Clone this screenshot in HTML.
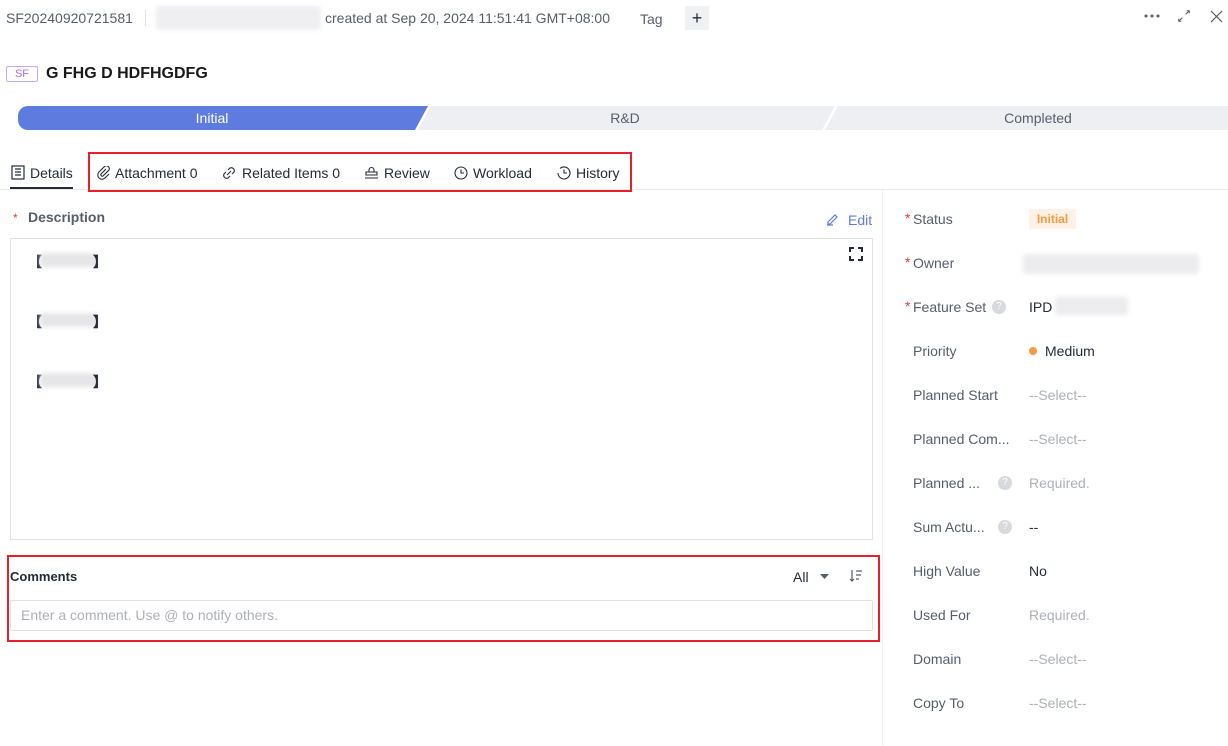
<!DOCTYPE html><html><head><meta charset="utf-8"><style>
*{margin:0;padding:0;box-sizing:border-box}
body{width:1228px;height:746px;background:#fff;font-family:"Liberation Sans",sans-serif;font-size:14px;color:#252b3a;position:relative;overflow:hidden}
.a{position:absolute}
.blur{background:#e6e6e8;border-radius:3px;filter:blur(2px)}
.lab{position:absolute;left:913px;color:#575d6c;font-size:14px}
.star{color:#e53935;position:absolute;left:905px}
.val{position:absolute;left:1029px;font-size:14px}
.ph{color:#adb0b8}
.q{position:absolute;width:14px;height:14px;border-radius:50%;background:#d8d9dd;color:#fff;font-size:10px;text-align:center;line-height:14px}
</style></head><body>
<div class="a" style="left:6px;top:10px;color:#575d6c">SF20240920721581</div>
<div class="a" style="left:145px;top:10px;width:1px;height:16px;background:#dfe1e6"></div>
<div class="a blur" style="left:156px;top:6px;width:165px;height:24px;background:#efeff1"></div>
<div class="a" style="left:325px;top:10px;color:#575d6c">created at Sep 20, 2024 11:51:41 GMT+08:00</div>
<div class="a" style="left:640px;top:11px;color:#575d6c">Tag</div>
<div class="a" style="left:685px;top:6px;width:24px;height:24px;background:#f0f1f3;text-align:center;line-height:24px;font-size:18px;color:#252b3a">+</div>
<svg class="a" style="left:1144px;top:14px" width="18" height="4"><circle cx="2" cy="2" r="1.5" fill="#575d6c"/><circle cx="8" cy="2" r="1.5" fill="#575d6c"/><circle cx="14" cy="2" r="1.5" fill="#575d6c"/></svg>
<svg class="a" style="left:1177px;top:9px" width="14" height="14" viewBox="0 0 16 16" fill="none" stroke="#575d6c" stroke-width="1.2"><path d="M10 6l4-4M11 2h3v3M6 10l-4 4M2 11v3h3"/></svg>
<svg class="a" style="left:1210px;top:10px" width="13" height="13" viewBox="0 0 14 14" stroke="#575d6c" stroke-width="1.2"><path d="M1 1l12 12M13 1L1 13"/></svg>

<div class="a" style="left:6px;top:66px;width:32px;height:16px;border:1px solid #c9a6ff;color:#a66ef5;font-size:11px;text-align:center;line-height:14px;border-radius:2px">SF</div>
<div class="a" style="left:46px;top:65px;font-size:16px;font-weight:bold;color:#191919">G FHG D HDFHGDFG</div>

<svg class="a" style="left:18px;top:106px" width="1210" height="24">
<path d="M10 0H410L397 24H10A10 10 0 0 1 0 14V10A10 10 0 0 1 10 0Z" fill="#5e7ce0"/>
<path d="M413 0H817L804 24H400Z" fill="#eeeff3"/>
<path d="M820 0H1210V24H807Z" fill="#eeeff3"/>
<text x="194" y="17" fill="#fff" font-size="14" text-anchor="middle" font-family="Liberation Sans">Initial</text>
<text x="607" y="17" fill="#575d6c" font-size="14" text-anchor="middle" font-family="Liberation Sans">R&amp;D</text>
<text x="1020" y="17" fill="#575d6c" font-size="14" text-anchor="middle" font-family="Liberation Sans">Completed</text>
</svg>

<div class="a" style="left:0;top:189px;width:1228px;height:1px;background:#e8e9ed"></div>
<div class="a" style="left:882px;top:190px;width:1px;height:556px;background:#eeeff2"></div>
<svg class="a" style="left:11px;top:165px" width="14" height="15" viewBox="0 0 14 15" fill="none" stroke="#252b3a" stroke-width="1.2"><rect x="1" y="1" width="12" height="13"/><path d="M4 4h6M4 7h6M4 10h6"/></svg>
<div class="a" style="left:30px;top:165px;color:#252b3a">Details</div>
<div class="a" style="left:10px;top:187px;width:63px;height:2px;background:#252b3a"></div>
<div class="a" style="left:88px;top:152px;width:544px;height:40px;border:2px solid #e5202b"></div>
<svg class="a" style="left:97px;top:166px" width="14" height="14" viewBox="0 0 14 14" fill="none" stroke="#252b3a" stroke-width="1.1"><path d="M9 3L4 8a1.5 1.5 0 0 0 2 2l6-6a3 3 0 0 0-4-4L2 6a4 4 0 0 0 6 6l4-4"/></svg>
<div class="a" style="left:115px;top:165px">Attachment 0</div>
<svg class="a" style="left:221px;top:165px" width="16" height="16" viewBox="0 0 16 16" fill="none" stroke="#252b3a" stroke-width="1.1"><path d="M7 5l2-2a3 3 0 0 1 4 4l-2 2M9 11l-2 2a3 3 0 0 1-4-4l2-2M6 10l4-4"/></svg>
<div class="a" style="left:242px;top:165px">Related Items 0</div>
<svg class="a" style="left:364px;top:165px" width="15" height="15" viewBox="0 0 15 15" fill="none" stroke="#252b3a" stroke-width="1.1"><path d="M5 7V5a2.5 2.5 0 0 1 5 0v2M2 7h11v3H2zM1 13h13"/></svg>
<div class="a" style="left:384px;top:165px">Review</div>
<svg class="a" style="left:454px;top:166px" width="14" height="14" viewBox="0 0 14 14" fill="none" stroke="#252b3a" stroke-width="1.1"><circle cx="7" cy="7" r="6"/><path d="M7 3.5V7h3"/></svg>
<div class="a" style="left:473px;top:165px">Workload</div>
<svg class="a" style="left:557px;top:166px" width="14" height="14" viewBox="0 0 14 14" fill="none" stroke="#252b3a" stroke-width="1.1"><path d="M3 2.5A6 6 0 1 1 1 7"/><path d="M7 3.5V7h3"/></svg>
<div class="a" style="left:576px;top:165px">History</div>

<div class="a" style="left:13px;top:211px;color:#e53935;font-size:12px">*</div>
<div class="a" style="left:28px;top:209px;font-weight:bold;color:#575d6c">Description</div>
<svg class="a" style="left:826px;top:212px" width="14" height="14" viewBox="0 0 14 14" fill="none" stroke="#5e7ce0" stroke-width="1.2"><path d="M2 10l7-7 2 2-7 7H2z M1 13h6"/></svg>
<div class="a" style="left:848px;top:212px;color:#5e7ce0">Edit</div>
<div class="a" style="left:10px;top:238px;width:863px;height:302px;border:1px solid #dfe1e6"></div>
<svg class="a" style="left:849px;top:247px" width="14" height="14" fill="none" stroke="#252b3a" stroke-width="2"><path d="M1 5V1h4M9 1h4v4M13 9v4H9M5 13H1V9"/></svg>
<div class="a" style="left:28px;top:252px;font-weight:bold">【</div><div class="a blur" style="left:40px;top:253px;width:58px;height:14px"></div><div class="a" style="left:93px;top:252px;font-weight:bold">】</div>
<div class="a" style="left:28px;top:312px;font-weight:bold">【</div><div class="a blur" style="left:40px;top:313px;width:58px;height:14px"></div><div class="a" style="left:93px;top:312px;font-weight:bold">】</div>
<div class="a" style="left:28px;top:372px;font-weight:bold">【</div><div class="a blur" style="left:40px;top:373px;width:58px;height:14px"></div><div class="a" style="left:93px;top:372px;font-weight:bold">】</div>

<div class="a" style="left:7px;top:555px;width:873px;height:87px;border:2px solid #e5202b"></div>
<div class="a" style="left:10px;top:569px;font-weight:bold;font-size:13px">Comments</div>
<div class="a" style="left:793px;top:569px;color:#252b3a">All</div>
<svg class="a" style="left:820px;top:574px" width="9" height="6"><path d="M0 0h9L4.5 5z" fill="#575d6c"/></svg>
<svg class="a" style="left:849px;top:569px" width="14" height="13" fill="none" stroke="#575d6c" stroke-width="1.2"><path d="M3 1v11M1 10l2 2 2-2M7 2h6M7 6h5M7 10h3"/></svg>
<div class="a" style="left:10px;top:600px;width:863px;height:31px;border:1px solid #dfe1e6;border-radius:2px"></div>
<div class="a ph" style="left:21px;top:607px">Enter a comment. Use @ to notify others.</div>

<span class="star" style="top:210px">*</span><div class="lab" style="top:211px">Status</div>
<div class="a" style="left:1029px;top:209px;width:47px;height:20px;background:#fff1e6;border-radius:2px;color:#fa9841;font-size:12px;font-weight:bold;text-align:center;line-height:20px">Initial</div>
<span class="star" style="top:254px">*</span><div class="lab" style="top:255px">Owner</div>
<div class="a blur" style="left:1023px;top:254px;width:176px;height:20px;background:#ececee"></div>
<span class="star" style="top:298px">*</span><div class="lab" style="top:299px">Feature Set</div>
<div class="q" style="left:992px;top:300px">?</div>
<div class="val" style="top:299px">IPD</div><div class="a blur" style="left:1055px;top:297px;width:73px;height:18px;background:#ececee"></div>
<div class="lab" style="top:343px">Priority</div>
<div class="a" style="left:1029px;top:347px;width:8px;height:8px;border-radius:50%;background:#fa9841"></div>
<div class="val" style="left:1045px;top:343px">Medium</div>
<div class="lab" style="top:387px">Planned Start</div><div class="val ph" style="top:387px">--Select--</div>
<div class="lab" style="top:431px">Planned Com...</div><div class="val ph" style="top:431px">--Select--</div>
<div class="lab" style="top:475px">Planned ...</div>
<div class="q" style="left:998px;top:476px">?</div>
<div class="val ph" style="top:475px">Required.</div>
<div class="lab" style="top:519px">Sum Actu...</div>
<div class="q" style="left:998px;top:520px">?</div>
<div class="val" style="top:519px">--</div>
<div class="lab" style="top:563px">High Value</div><div class="val" style="top:563px">No</div>
<div class="lab" style="top:607px">Used For</div><div class="val ph" style="top:607px">Required.</div>
<div class="lab" style="top:651px">Domain</div><div class="val ph" style="top:651px">--Select--</div>
<div class="lab" style="top:695px">Copy To</div><div class="val ph" style="top:695px">--Select--</div>
</body></html>
